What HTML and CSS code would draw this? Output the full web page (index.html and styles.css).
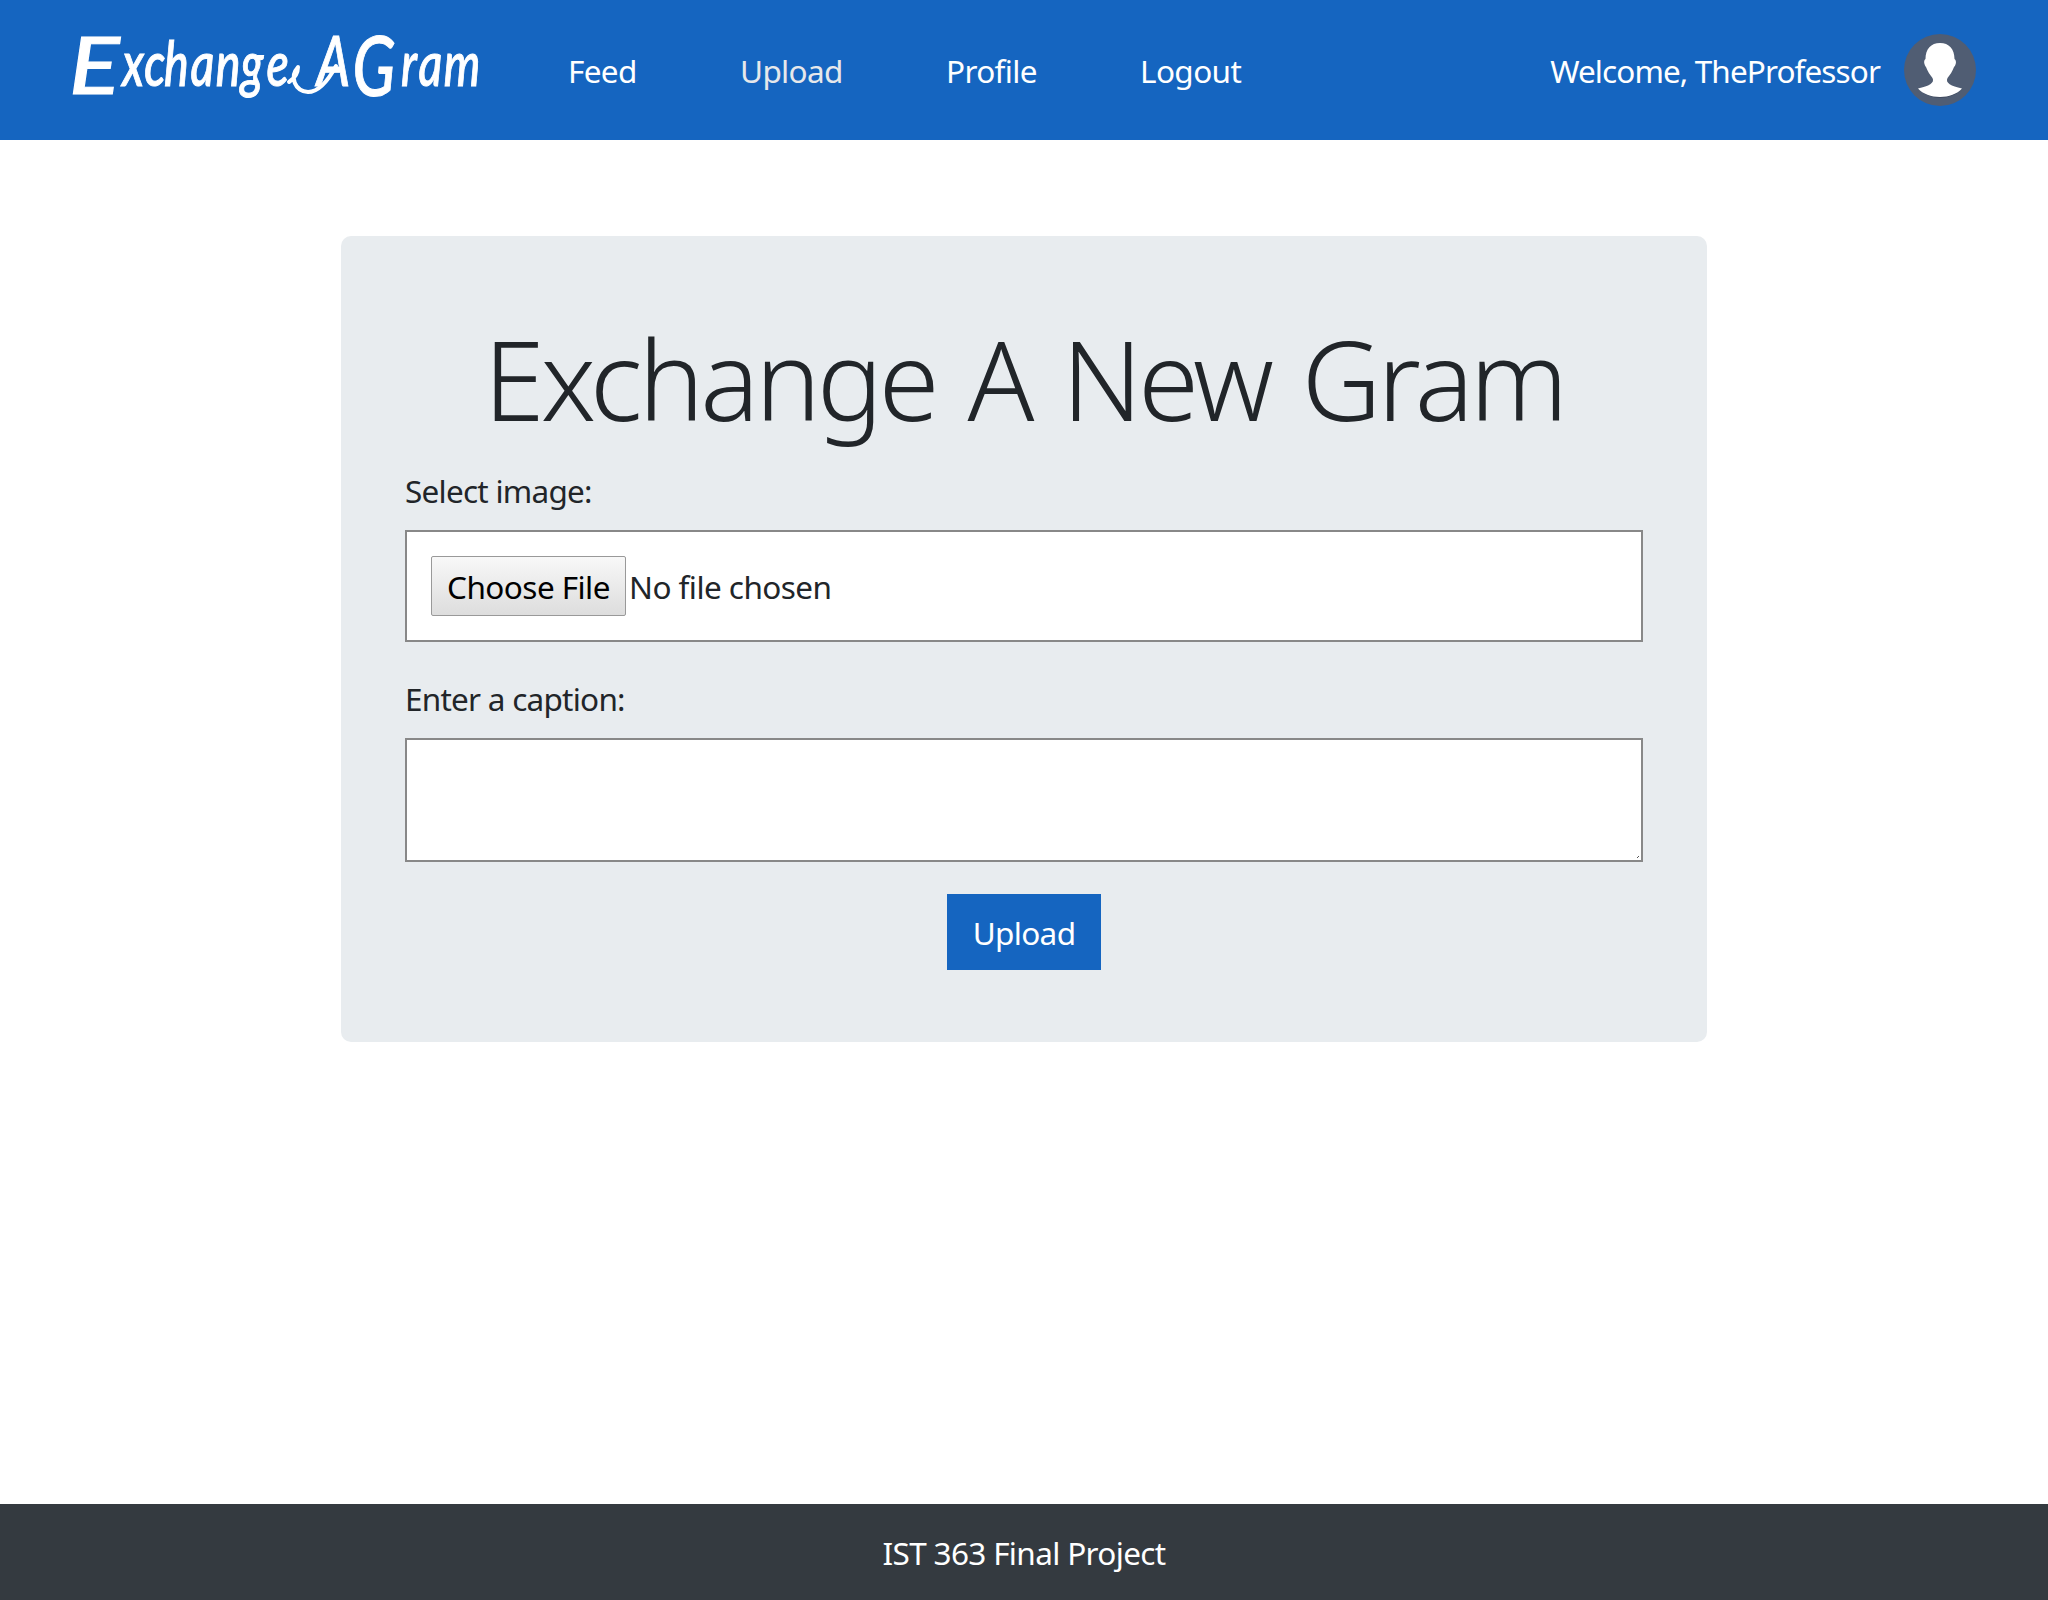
FILE: index.html
```html
<!DOCTYPE html>
<html lang="en">
<head>
<meta charset="utf-8">
<title>ExchangeAGram - Upload</title>
<link rel="stylesheet" href="styles.css">
</head>
<body>
<header class="navbar">
  <a class="brand" href="#">
    <svg class="logo" width="408" height="72" viewBox="0 0 408 72">
      <text class="logo-text logo-cap" transform="translate(-3 60) scale(1.18 1)">E</text>
      <text class="logo-text" transform="scale(.76 1)"><tspan x="66 95 121 156 189 222 256" y="52">xchange</tspan><tspan class="logo-a" x="322" y="52">A</tspan><tspan class="logo-g" x="369" y="62">G</tspan><tspan x="433 456 489" y="52">ram</tspan></text>
      <path class="swash" d="M217 48C223 44 226 39 226 33C217 43 223 57 236 58C248 58 257 45 264 32"/>
    </svg>
  </a>
  <nav class="links">
    <a class="link feed" href="#">Feed</a>
    <a class="link upload active" href="#">Upload</a>
    <a class="link profile" href="#">Profile</a>
    <a class="link logout" href="#">Logout</a>
  </nav>
  <span class="welcome">Welcome, TheProfessor</span>
  <svg class="avatar" width="72" height="72" viewBox="0 0 72 72">
    <circle cx="36" cy="36" r="36" fill="#505d73"/>
    <path d="M15 56Q36 72 58 56Q36 69 15 56Z" fill="#3f4a5f"/>
    <path d="M36 9C27 9 21.500 15 21.500 25C19 27 20.500 31 22 33C23.500 37 26 41 28.500 44C31 49 25 52 14 54.500C19 60 27 63 36 63S53 60 58 54.500C47 52 41 49 43.500 44C46 41 48.500 37 50 33C52 31 53 27 50.500 25C50.500 15 45 9 36 9Z" fill="#fff"/>
  </svg>
</header>
<main class="content">
  <form class="card">
    <h1 class="title">Exchange A New Gram</h1>
    <label class="label select-label">Select image:</label>
    <div class="file-box">
      <button class="choose" type="button">Choose File</button>
      <span class="file-name">No file chosen</span>
    </div>
    <label class="label caption-label">Enter a caption:</label>
    <div class="caption-box">
      <svg class="grip" width="2" height="2" viewBox="0 0 2 2"><path d="M0 1h1v1H0zM1 0h1v1H1z" fill="#555"/></svg>
    </div>
    <button class="submit" type="button"><span class="submit-text">Upload</span></button>
  </form>
</main>
<footer class="footer"><span class="footer-text">IST 363 Final Project</span></footer>
</body>
</html>
```

FILE: styles.css
```css
* { box-sizing: border-box; }
body {
  margin: 0;
  min-height: 1600px;
  display: flex;
  flex-direction: column;
  background: #fff;
  color: #212529;
  font: 31.5px/48px "Noto Sans", "Open Sans", sans-serif;
  letter-spacing: -0.65px;
}
.navbar {
  height: 140px;
  padding: 0 72px;
  display: flex;
  align-items: center;
  background: #1565c0;
  color: #fff;
}
.brand, .logo, .avatar { display: block; }
.logo { overflow: visible; }
.logo-text {
  fill: #fff;
  stroke: #fff;
  stroke-width: 1px;
  font: italic 500 61px Lato, sans-serif;
  letter-spacing: 0;
}
.logo-cap { font-size: 80px; }
.logo-a { font-size: 69px; }
.logo-g { font-size: 83px; }
.swash { fill: none; stroke: #fff; stroke-width: 4; stroke-linecap: round; stroke-linejoin: round; }
.links { display: flex; margin-left: 88px; padding-top: 1px; }
.link { color: #fff; text-decoration: none; white-space: nowrap; }
.active { color: #e6e8eb; }
.feed { width: 172px; }
.upload { width: 206px; }
.profile { width: 194px; }
.logout { letter-spacing: -0.6px; }
.welcome { margin-left: auto; margin-right: 24px; padding-top: 1px; letter-spacing: -0.9px; white-space: nowrap; }
.content { flex: 1; padding-top: 96px; }
.card {
  width: 1366px;
  height: 806px;
  margin: 0 auto;
  padding: 75px 64px 0;
  display: flex;
  flex-direction: column;
  background: #e8ecef;
  border-radius: 10px;
}
.title {
  margin: 0 0 22px;
  font-size: 110px;
  line-height: 134px;
  font-weight: 300;
  letter-spacing: -3.9px;
  word-spacing: 7px;
  text-align: center;
  white-space: nowrap;
}
.label { display: block; height: 48px; margin-bottom: 15px; }
.select-label { letter-spacing: -0.75px; }
.file-box {
  height: 112px;
  padding: 0 24px;
  display: flex;
  align-items: center;
  gap: 3px;
  background: #fff;
  border: 2px solid #888;
  margin-bottom: 33px;
}
.choose {
  width: 195px;
  height: 60px;
  padding: 1px 0 0;
  border: 1px solid #999;
  border-radius: 2px;
  background: linear-gradient(#f8f8f8, #ddd);
  color: #000;
  font: inherit;
  letter-spacing: -0.55px;
  white-space: nowrap;
}
.file-name { padding-top: 1px; letter-spacing: -0.55px; }
.caption-label { letter-spacing: -0.75px; }
.caption-box {
  height: 124px;
  background: #fff;
  border: 2px solid #888;
  display: flex;
  align-items: flex-end;
  justify-content: flex-end;
  padding: 2px;
}
.submit {
  width: 154px;
  height: 76px;
  margin: 32px auto 0;
  padding: 1px 0 0;
  border: 0;
  background: #1565c0;
  color: #fff;
  font: inherit;
  letter-spacing: inherit;
}
.footer {
  height: 96px;
  padding-top: 2px;
  display: flex;
  align-items: center;
  justify-content: center;
  background: #343a40;
  color: #fff;
}
```
